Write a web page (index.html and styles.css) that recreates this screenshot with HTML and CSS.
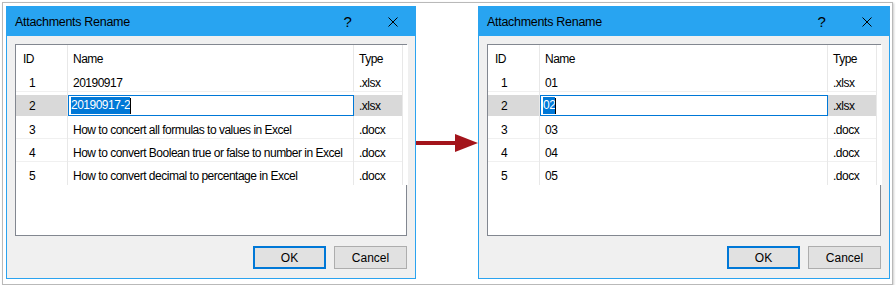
FILE: index.html
```html
<!DOCTYPE html>
<html lang="en">

<head>
    <meta charset="UTF-8">
    <title>Attachments Rename</title>
    <link rel="stylesheet" href="styles.css">
</head>

<body>
    <div class="frame">
        <!-- before -->
        <div class="dialog left">
            <div class="titlebar">
                <span class="title">Attachments Rename</span>
                <span class="tbtn help">?</span>
                <span class="tbtn close">
                    <svg width="10" height="10" viewBox="0 0 10 10"><path d="M0.5 0.5L9.5 9.5M9.5 0.5L0.5 9.5" stroke="#000" stroke-width="1" fill="none"/></svg>
                </span>
            </div>
            <div class="body">
                <div class="list">
                    <div class="row head">
                        <div class="cell id">ID</div>
                        <div class="cell name">Name</div>
                        <div class="cell type">Type</div>
                        <div class="cell pad"></div>
                    </div>
                    <div class="row line">
                        <div class="cell id num">1</div>
                        <div class="cell name">20190917</div>
                        <div class="cell type">.xlsx</div>
                        <div class="cell pad"></div>
                    </div>
                    <div class="row selected">
                        <div class="cell id num">2</div>
                        <div class="cell name"><div class="edit"><span class="sel">20190917-2</span><span class="caret"></span></div></div>
                        <div class="cell type">.xlsx</div>
                        <div class="cell pad"></div>
                    </div>
                    <div class="row line">
                        <div class="cell id num">3</div>
                        <div class="cell name">How to concert all formulas to values in Excel</div>
                        <div class="cell type">.docx</div>
                        <div class="cell pad"></div>
                    </div>
                    <div class="row line">
                        <div class="cell id num">4</div>
                        <div class="cell name">How to convert Boolean true or false to number in Excel</div>
                        <div class="cell type">.docx</div>
                        <div class="cell pad"></div>
                    </div>
                    <div class="row">
                        <div class="cell id num">5</div>
                        <div class="cell name">How to convert decimal to percentage in Excel</div>
                        <div class="cell type">.docx</div>
                        <div class="cell pad"></div>
                    </div>
                </div>
                <div class="buttons">
                    <button class="btn default">OK</button>
                    <button class="btn">Cancel</button>
                </div>
            </div>
        </div>

        <div class="arrow">
            <svg width="62" height="20" viewBox="0 0 62 20">
                <rect x="0" y="7" width="40" height="4" fill="#a3141b"/>
                <path d="M39 0L62 9L39 18Z" fill="#a3141b"/>
            </svg>
        </div>

        <!-- after -->
        <div class="dialog right">
            <div class="titlebar">
                <span class="title">Attachments Rename</span>
                <span class="tbtn help">?</span>
                <span class="tbtn close">
                    <svg width="10" height="10" viewBox="0 0 10 10"><path d="M0.5 0.5L9.5 9.5M9.5 0.5L0.5 9.5" stroke="#000" stroke-width="1" fill="none"/></svg>
                </span>
            </div>
            <div class="body">
                <div class="list">
                    <div class="row head">
                        <div class="cell id">ID</div>
                        <div class="cell name">Name</div>
                        <div class="cell type">Type</div>
                        <div class="cell pad"></div>
                    </div>
                    <div class="row line">
                        <div class="cell id num">1</div>
                        <div class="cell name">01</div>
                        <div class="cell type">.xlsx</div>
                        <div class="cell pad"></div>
                    </div>
                    <div class="row selected">
                        <div class="cell id num">2</div>
                        <div class="cell name"><div class="edit"><span class="sel">02</span><span class="caret"></span></div></div>
                        <div class="cell type">.xlsx</div>
                        <div class="cell pad"></div>
                    </div>
                    <div class="row line">
                        <div class="cell id num">3</div>
                        <div class="cell name">03</div>
                        <div class="cell type">.docx</div>
                        <div class="cell pad"></div>
                    </div>
                    <div class="row line">
                        <div class="cell id num">4</div>
                        <div class="cell name">04</div>
                        <div class="cell type">.docx</div>
                        <div class="cell pad"></div>
                    </div>
                    <div class="row">
                        <div class="cell id num">5</div>
                        <div class="cell name">05</div>
                        <div class="cell type">.docx</div>
                        <div class="cell pad"></div>
                    </div>
                </div>
                <div class="buttons">
                    <button class="btn default">OK</button>
                    <button class="btn">Cancel</button>
                </div>
            </div>
        </div>
    </div>
</body>

</html>
```

FILE: styles.css
```css
body {
    margin: 0;
    background: #ffffff;
    font-family: "Liberation Sans", Arial, sans-serif;
    font-size: 12px;
    letter-spacing: -0.5px;
    color: #000000;
}

.frame {
    display: flex;
    width: 884px;
    margin: 2px 0 0 2px;
    padding: 3px 2px 5px 3px;
    border: 1px solid #b9b9b9;
    box-shadow: 1px 1px 2px rgba(0, 0, 0, 0.2);
}

.dialog {
    box-sizing: border-box;
    height: 273px;
    border: 1px solid #2ba3ef;
    background-color: #f0f0f0;
    display: flex;
    flex-direction: column;
}

.dialog.left {
    width: 410px;
}

.dialog.right {
    width: 412px;
}

.titlebar {
    display: flex;
    align-items: center;
    height: 29px;
    margin-top: -1px;
    padding-top: 1px;
    background-color: #28a4f1;
}

.title {
    flex: 1;
    padding-left: 8px;
    padding-top: 1px;
    font-size: 12.5px;
    letter-spacing: -0.3px;
}

.tbtn {
    width: 45px;
    height: 29px;
    display: flex;
    align-items: center;
    justify-content: center;
}

.help {
    font-size: 15px;
}

.close svg {
    display: block;
}

.body {
    flex: 1;
    padding: 8px 8px 9px 8px;
    display: flex;
    flex-direction: column;
}

.list {
    height: 190px;
    border: 1px solid #828790;
    background-color: #ffffff;
}

.row {
    display: grid;
    grid-template-columns: 52px minmax(0, 1fr) 49px 3px;
    height: 23px;
}

.row.head {
    height: 24px;
}

.row.line {
    box-shadow: inset 0 -1px 0 #f0f0f0;
}

.row.selected {
    height: 24px;
    background: linear-gradient(#ffffff 0 3px, #d9d9d9 3px);
}

.cell {
    box-sizing: border-box;
    padding: 7px 0 0 5px;
    line-height: 15px;
    white-space: nowrap;
    overflow: hidden;
    border-right: 1px solid #e8e8e8;
}

.row.head .cell {
    padding-top: 7px;
}

.row.selected .cell {
    padding-top: 7px;
}

.cell.id {
    padding-left: 7px;
}

.cell.num {
    padding-left: 13px;
}

.cell.pad {
    border-right: none;
    background-color: #ffffff;
}

.row.selected .cell.name {
    padding: 3px 0 0 0;
    border-right: none;
    overflow: visible;
}

.edit {
    box-sizing: border-box;
    height: 21px;
    padding: 0 0 0 2px;
    border: 1px solid #0078d7;
    background-color: #ffffff;
    display: flex;
    align-items: center;
}

.sel {
    background-color: #0078d7;
    color: #ffffff;
    line-height: 17px;
}

.caret {
    width: 1px;
    height: 16px;
    background-color: #000000;
}

.buttons {
    display: flex;
    justify-content: flex-end;
    gap: 8px;
    margin-top: 10px;
}

.btn {
    box-sizing: border-box;
    width: 73px;
    height: 23px;
    padding: 0;
    font-family: inherit;
    font-size: 12px;
    color: #000000;
    background-color: #e1e1e1;
    border: 1px solid #adadad;
}

.btn.default {
    border: 2px solid #0078d7;
}

.arrow {
    width: 62px;
    display: flex;
    align-items: center;
    padding-top: 2px;
}

.arrow svg {
    display: block;
}
```
